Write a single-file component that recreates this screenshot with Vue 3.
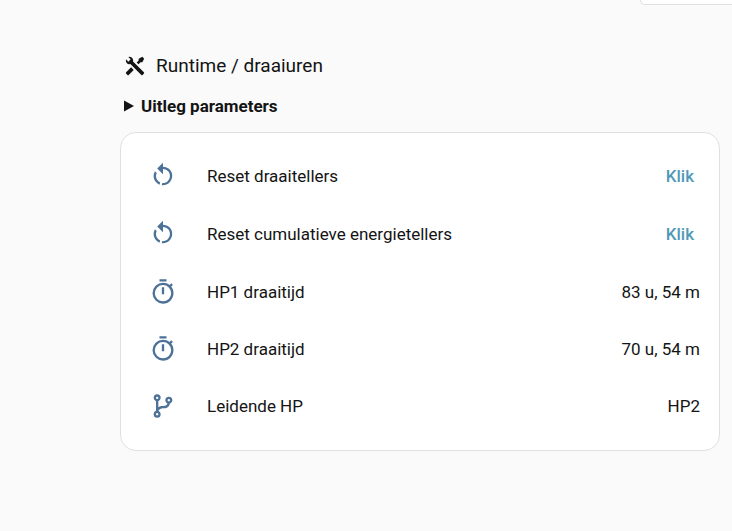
<script setup>
const icons = {
  tools:
    'M21.71 20.29L20.29 21.71A1 1 0 0 1 18.88 21.71L7 9.85A3.81 3.81 0 0 1 6 10A4 4 0 0 1 2.22 4.7L4.76 7.24L5.29 6.71L6.71 5.29L7.24 4.76L4.7 2.22A4 4 0 0 1 10 6A3.81 3.81 0 0 1 9.85 7L21.71 18.88A1 1 0 0 1 21.71 20.29M2.29 18.88A1 1 0 0 0 2.29 20.29L3.71 21.71A1 1 0 0 0 5.12 21.71L10.59 16.25L7.76 13.42M20 2L16 4V6L13.83 8.17L15.83 10.17L18 8H20L22 4Z',
  restart:
    'M12,4C14.1,4 16.1,4.8 17.6,6.3C20.7,9.4 20.7,14.5 17.6,17.6C15.8,19.5 13.3,20.2 10.9,19.9L11.4,17.9C13.1,18.1 14.9,17.5 16.2,16.2C18.5,13.9 18.5,10.1 16.2,7.7C15.1,6.6 13.5,6 12,6V10.6L7,5.6L12,0.6V4M6.3,17.6C3.7,15 3.3,11 5.1,7.9L6.6,9.4C5.5,11.6 5.9,14.4 7.8,16.2C8.3,16.7 8.9,17.1 9.6,17.4L9,19.4C8,19 7.1,18.4 6.3,17.6Z',
  timer:
    'M12,20A7,7 0 0,1 5,13A7,7 0 0,1 12,6A7,7 0 0,1 19,13A7,7 0 0,1 12,20M19.03,7.39L20.45,5.97C20,5.46 19.55,5 19.04,4.56L17.62,6C16.07,4.74 14.12,4 12,4A9,9 0 0,0 3,13A9,9 0 0,0 12,22C17,22 21,17.97 21,13C21,10.88 20.26,8.93 19.03,7.39M11,14H13V8H11M15,1H9V3H15V1Z',
  branch:
    'M13,14C9.64,14 8.54,15.35 8.18,16.24C9.25,16.7 10,17.76 10,19A3,3 0 0,1 7,22A3,3 0 0,1 4,19C4,17.69 4.83,16.58 6,16.17V7.83C4.83,7.42 4,6.31 4,5A3,3 0 0,1 7,2A3,3 0 0,1 10,5C10,6.31 9.17,7.42 8,7.83V13.12C8.88,12.47 10.16,12 12,12C14.67,12 15.56,10.66 15.85,9.77C14.77,9.32 14,8.25 14,7A3,3 0 0,1 17,4A3,3 0 0,1 20,7C20,8.34 19.12,9.5 17.91,9.86C17.65,11.29 16.68,14 13,14M7,18A1,1 0 0,0 6,19A1,1 0 0,0 7,20A1,1 0 0,0 8,19A1,1 0 0,0 7,18M7,4A1,1 0 0,0 6,5A1,1 0 0,0 7,6A1,1 0 0,0 8,5A1,1 0 0,0 7,4M17,6A1,1 0 0,0 16,7A1,1 0 0,0 17,8A1,1 0 0,0 18,7A1,1 0 0,0 17,6Z',
}

const rows = [
  { icon: 'restart', name: 'Reset draaitellers', action: 'Klik' },
  { icon: 'restart', name: 'Reset cumulatieve energietellers', action: 'Klik' },
  { icon: 'timer', name: 'HP1 draaitijd', value: '83 u, 54 m' },
  { icon: 'timer', name: 'HP2 draaitijd', value: '70 u, 54 m' },
  { icon: 'branch', name: 'Leidende HP', value: 'HP2' },
]
</script>

<template>
  <main class="view">
    <div class="previous-card"></div>
    <section class="section">
      <h2 class="heading">
        <svg class="heading-icon" viewBox="0 0 24 24" aria-hidden="true"><path :d="icons.tools" /></svg>
        <span>Runtime / draaiuren</span>
      </h2>
      <details class="help">
        <summary>
          <svg class="marker" viewBox="0 0 10 12" aria-hidden="true"><path d="M0 0.5L10 6L0 11.5Z" /></svg>
          <span>Uitleg parameters</span>
        </summary>
      </details>
      <ul class="card">
        <li v-for="row in rows" :key="row.name" class="row" :class="{ actionable: row.action }">
          <svg class="row-icon" viewBox="0 0 24 24" aria-hidden="true"><path :d="icons[row.icon]" /></svg>
          <span class="name">{{ row.name }}</span>
          <button v-if="row.action" type="button" class="press" :aria-label="`${row.action} ${row.name}`">{{ row.action }}</button>
          <span v-else class="value">{{ row.value }}</span>
        </li>
      </ul>
    </section>
  </main>
</template>

<style>
body {
  background: #fafafa;
}
</style>

<style scoped>
.view {
  padding: 0 12px 80px 120px;
  color: #141414;
  font-family: Roboto, 'Noto Sans', sans-serif;
  font-size: 17px;
  line-height: 24px;
}
.previous-card {
  height: 4px;
  margin: 0 -12px 0 520px;
  border: 1px solid #e0e0e0;
  border-width: 0 0 1px 1px;
  border-radius: 0 0 0 16px;
  background: #fff;
}
.heading {
  display: flex;
  align-items: center;
  gap: 10px;
  margin: 49px 0 0 4px;
  font-size: 19px;
  font-weight: 400;
}
.heading-icon {
  width: 22px;
  height: 22px;
  fill: currentColor;
}
.help {
  margin: 16px 0 14px 4px;
  font-weight: 700;
}
.help summary {
  display: flex;
  align-items: center;
  gap: 7px;
  list-style: none;
  cursor: pointer;
}
.marker {
  width: 10px;
  height: 12px;
  fill: currentColor;
}
.help[open] .marker {
  transform: rotate(90deg);
}
.card {
  margin: 0;
  padding: 14px 19px 16px 16px;
  border: 1px solid #e0e0e0;
  border-radius: 16px;
  background: #fff;
  list-style: none;
}
.row {
  display: flex;
  align-items: center;
  min-height: 57px;
}
.actionable {
  min-height: 58px;
}
.row-icon {
  flex: none;
  width: 28px;
  height: 28px;
  margin: 0 30px 0 12px;
  fill: #4d7298;
}
.name {
  flex: 1;
  min-width: 0;
}
.value {
  white-space: nowrap;
}
.press {
  padding: 6px;
  border: 0;
  border-radius: 4px;
  background: none;
  color: #4f99b8;
  font: inherit;
  font-weight: 500;
  cursor: pointer;
}
</style>
